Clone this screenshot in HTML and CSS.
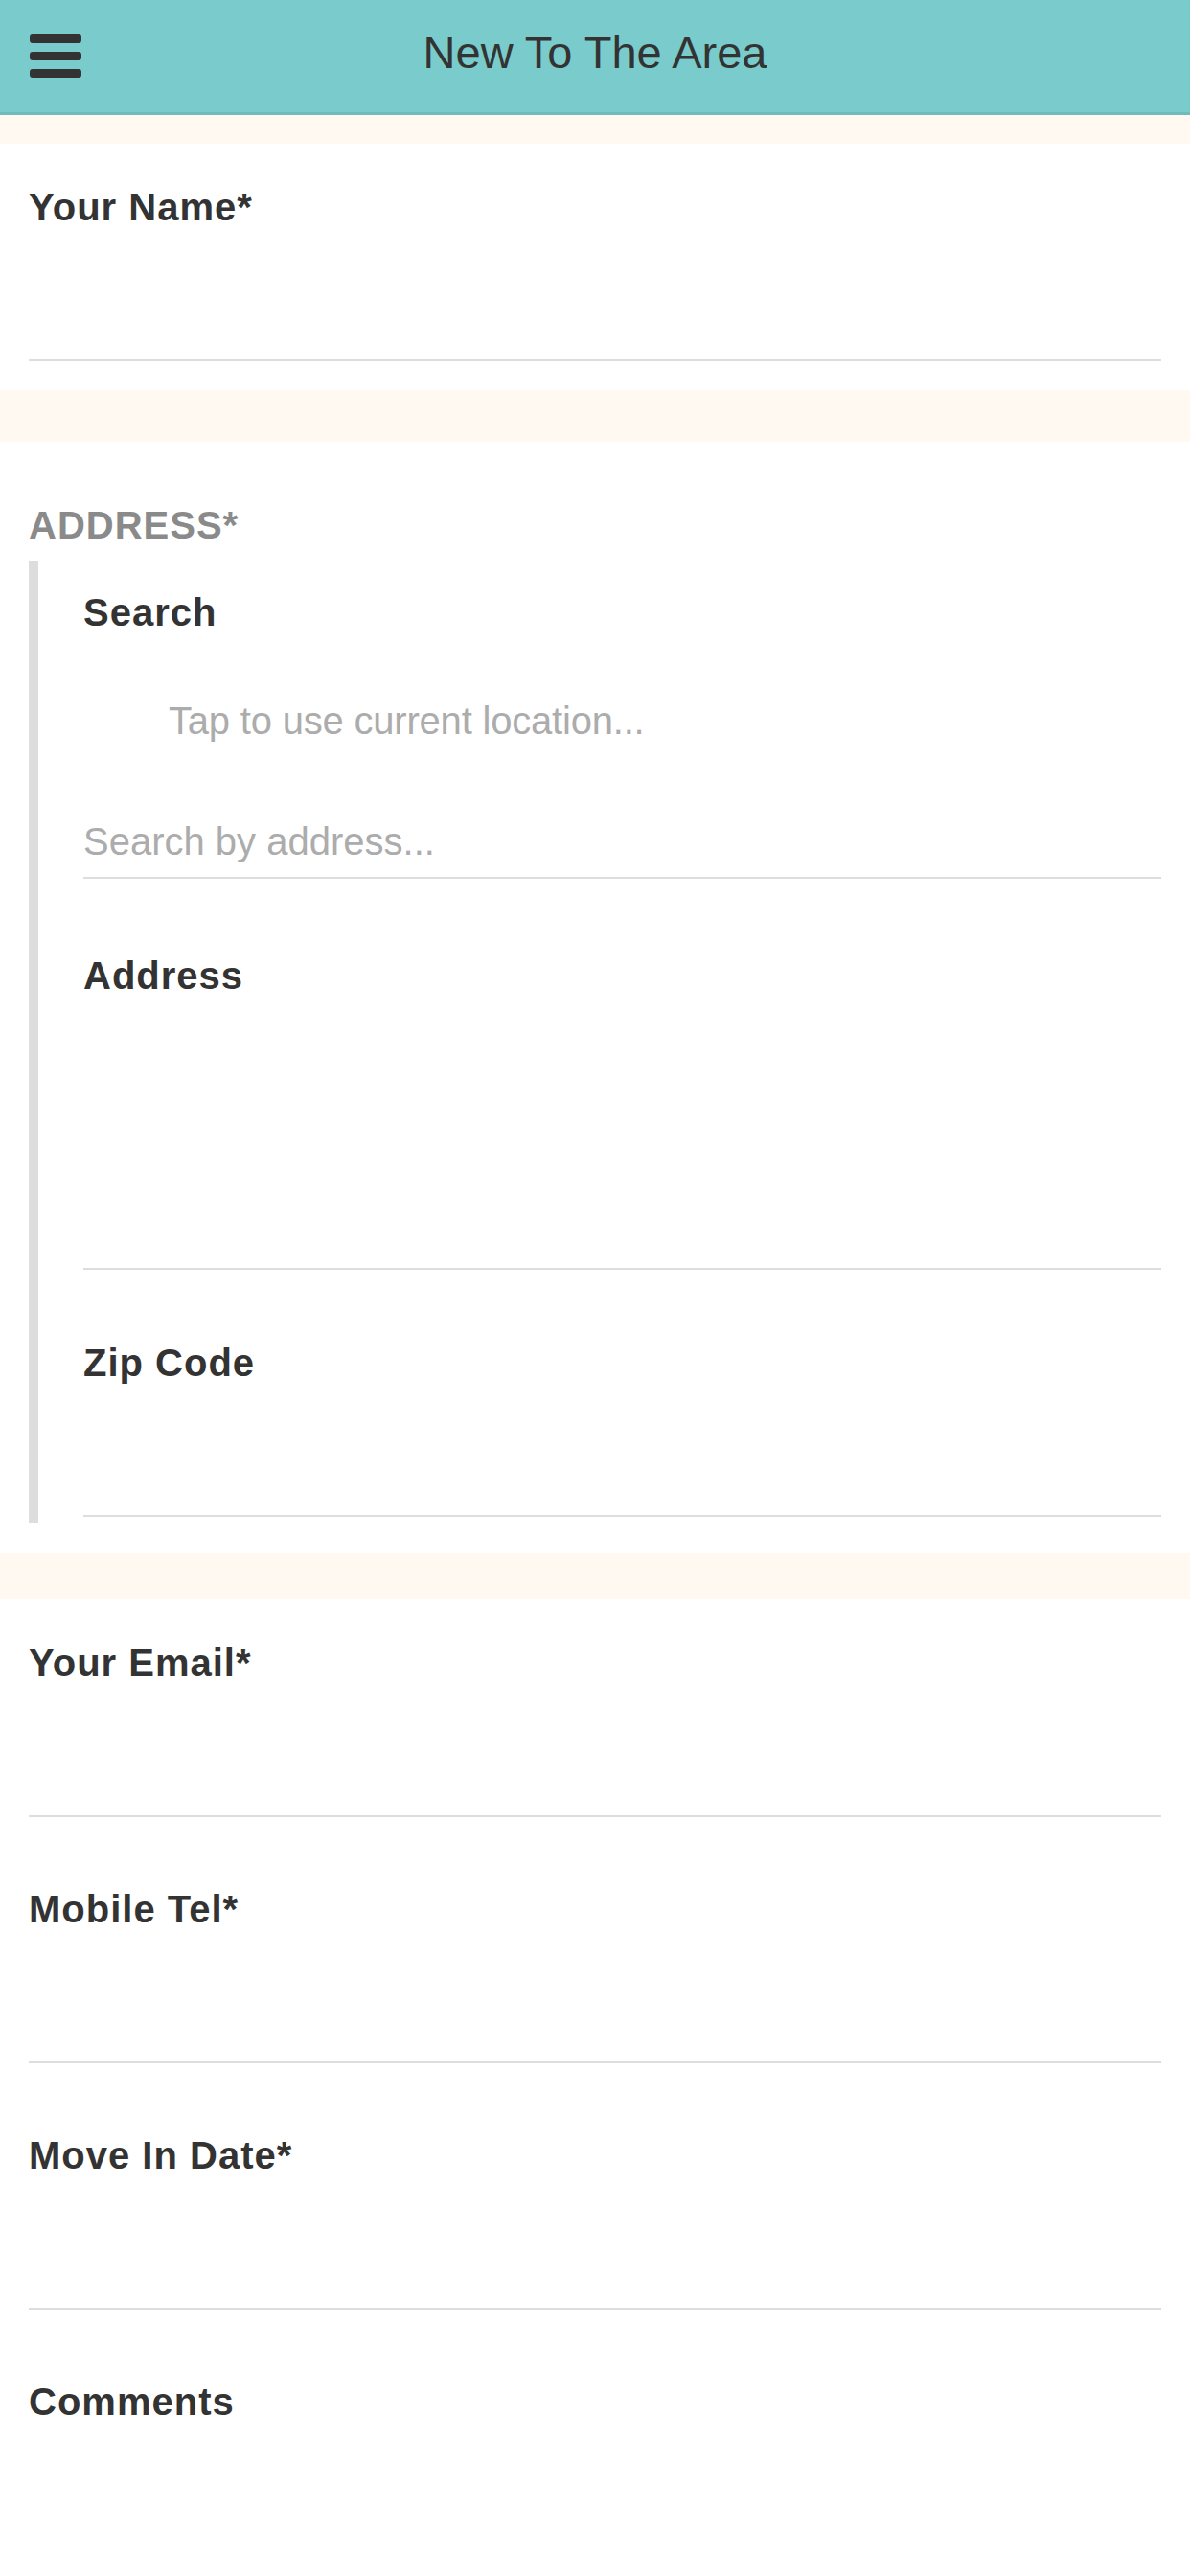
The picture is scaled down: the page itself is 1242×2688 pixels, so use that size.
FILE: index.html
```html
<!DOCTYPE html>
<html lang="en">
<head>
<meta charset="utf-8">
<title>New To The Area</title>
<link rel="stylesheet" href="styles.css">
</head>
<body>
<header class="topbar">
  <button class="menu-btn" type="button" aria-label="Menu">
    <svg width="54" height="45" viewBox="0 0 54 45">
      <rect x="0" y="0" width="54" height="9" rx="3"/>
      <rect x="0" y="18" width="54" height="9" rx="3"/>
      <rect x="0" y="36" width="54" height="9" rx="3"/>
    </svg>
  </button>
  <h1 class="title">New To The Area</h1>
  <span class="spacer"></span>
</header>
<main class="form">
  <div class="band band-top"></div>
  <div class="field">
    <label class="label">Your Name*</label>
    <input class="input" type="text">
  </div>
  <div class="band band-mid"></div>
  <section class="address">
    <div class="section-title">ADDRESS*</div>
    <div class="address-group">
      <div class="sub sub-search">
        <label class="label">Search</label>
        <div class="locate">Tap to use current location...</div>
        <input class="input search-input" type="text" placeholder="Search by address...">
      </div>
      <div class="sub sub-address">
        <label class="label">Address</label>
        <textarea class="input address-area"></textarea>
      </div>
      <div class="sub sub-zip">
        <label class="label">Zip Code</label>
        <input class="input" type="text">
      </div>
    </div>
  </section>
  <div class="band band-low"></div>
  <div class="field">
    <label class="label">Your Email*</label>
    <input class="input" type="email">
  </div>
  <div class="field">
    <label class="label">Mobile Tel*</label>
    <input class="input" type="tel">
  </div>
  <div class="field">
    <label class="label">Move In Date*</label>
    <input class="input" type="text">
  </div>
  <div class="field">
    <label class="label">Comments</label>
    <textarea class="input comments-area"></textarea>
  </div>
</main>
</body>
</html>
```

FILE: styles.css
```css
* {
  box-sizing: border-box;
}

html, body {
  margin: 0;
  padding: 0;
  background: #ffffff;
}

body {
  font-family: "Liberation Sans", Arial, Helvetica, sans-serif;
  color: #333333;
}

.topbar {
  height: 120px;
  background: #79cccb;
  border-bottom: 3px solid #6ebcbb;
  display: grid;
  grid-template-columns: 1fr auto 1fr;
  align-items: center;
  padding-left: 31px;
}

.menu-btn {
  justify-self: start;
  background: none;
  border: 0;
  padding: 0;
  margin: 0;
  display: flex;
  fill: #333333;
}

.title {
  margin: 0 0 8px -31px;
  font-size: 47px;
  font-weight: 400;
  line-height: 56px;
  color: #333333;
}

.band {
  background: #fff9f2;
}

.band-top {
  height: 30px;
}

.band-mid {
  height: 54px;
}

.band-low {
  height: 48px;
}

.field {
  padding: 42px 30px 30px;
}

.label {
  display: block;
  font-size: 40px;
  font-weight: 700;
  line-height: 48px;
  letter-spacing: 1px;
  color: #333333;
}

.input {
  display: block;
  width: 100%;
  height: 137px;
  margin: 0;
  padding: 0;
  border: 0;
  border-bottom: 2px solid #dddddd;
  background: transparent;
  font-family: "Liberation Sans", Arial, Helvetica, sans-serif;
  font-size: 40px;
  color: #333333;
  outline: none;
  resize: none;
}

.input::placeholder {
  color: #acacac;
  font-weight: 300;
}

.address {
  padding: 63px 30px 32px;
}

.section-title {
  font-size: 40px;
  font-weight: 700;
  line-height: 48px;
  letter-spacing: 1px;
  color: #8a8a8a;
  margin-bottom: 13px;
}

.address-group {
  border-left: 10px solid #dddddd;
  padding: 0 0 6px 47px;
}

.sub-search {
  padding-top: 30px;
}

.locate {
  margin-top: 65px;
  padding-left: 89px;
  font-size: 40px;
  line-height: 48px;
  font-weight: 300;
  letter-spacing: -0.2px;
  color: #acacac;
}

.search-input {
  margin-top: 78px;
  height: 63px;
  padding-bottom: 13px;
  line-height: 48px;
}

.sub-address {
  padding-top: 77px;
}

.address-area {
  height: 283px;
}

.sub-zip {
  padding-top: 73px;
}

.comments-area {
  height: 283px;
}
```
